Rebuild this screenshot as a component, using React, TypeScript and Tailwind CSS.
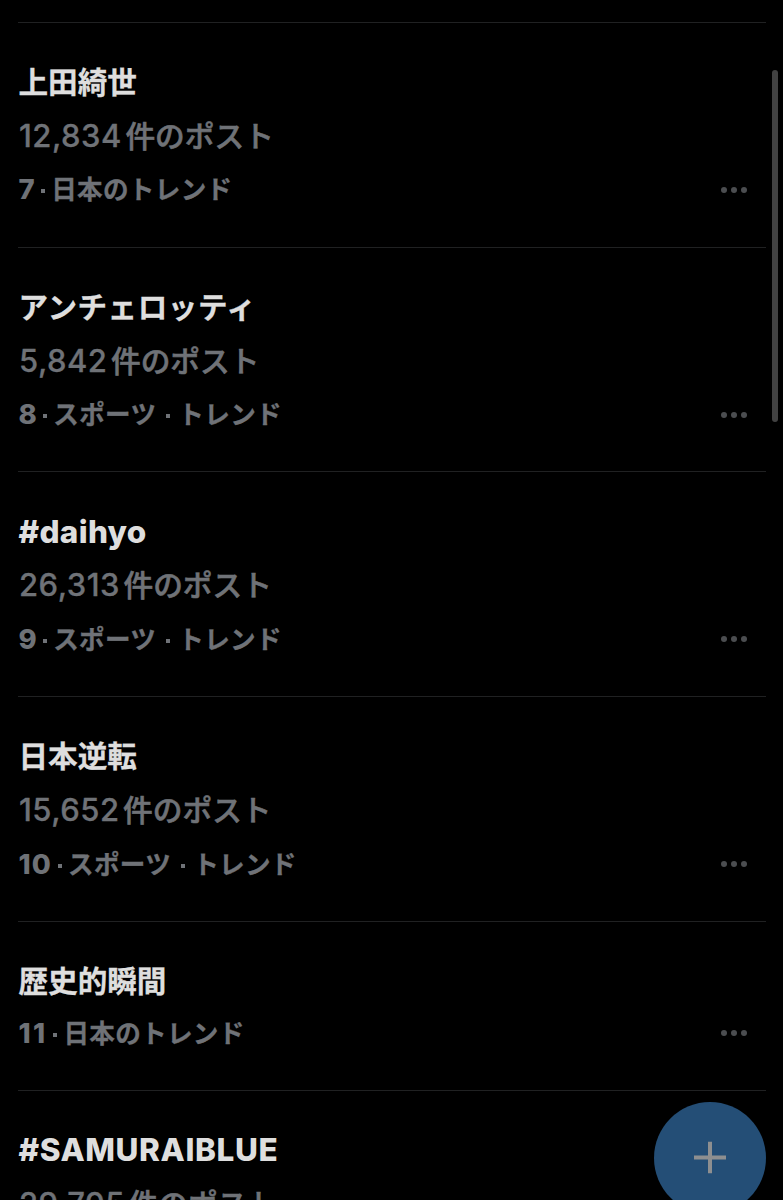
import { clsx } from "clsx"

type Trend = {
  title: string
  titleClass: string
  count?: string
  rank: number
  category: string[]
}

const kanji = "text-[29.6px] font-bold [-webkit-text-stroke:0.3px]"
const kana = "text-[29.6px] font-bold tracking-[0.5px] [-webkit-text-stroke:0.3px]"

const trends: Trend[] = [
  { title: "上田綺世", titleClass: kanji, count: "12,834", rank: 7, category: ["日本のトレンド"] },
  { title: "アンチェロッティ", titleClass: kana, count: "5,842", rank: 8, category: ["スポーツ", "トレンド"] },
  {
    title: "#daihyo",
    titleClass: "text-[31.5px] font-extrabold tracking-[0.3px]",
    count: "26,313",
    rank: 9,
    category: ["スポーツ", "トレンド"],
  },
  { title: "日本逆転", titleClass: kanji, count: "15,652", rank: 10, category: ["スポーツ", "トレンド"] },
  { title: "歴史的瞬間", titleClass: kanji, rank: 11, category: ["日本のトレンド"] },
  {
    title: "#SAMURAIBLUE",
    titleClass: "text-[31.5px] font-extrabold tracking-[0.6px]",
    count: "29,705",
    rank: 12,
    category: ["スポーツ", "トレンド"],
  },
]

function MoreButton() {
  return (
    <button aria-label="もっと見る" className="flex gap-[4px] pr-[19px]">
      <span className="size-[6px] rounded-full bg-[#4b4d50]" />
      <span className="size-[6px] rounded-full bg-[#4b4d50]" />
      <span className="size-[6px] rounded-full bg-[#4b4d50]" />
    </button>
  )
}

function TrendRow({ trend }: { trend: Trend }) {
  return (
    <article
      className={clsx(
        "shrink-0 border-t border-[#202122] pt-[38.2px]",
        trend.count ? "h-[224.75px]" : "h-[169px]"
      )}
    >
      <h2 className={clsx("flex h-[42px] items-center pl-[0.5px] whitespace-nowrap text-[#dedede]", trend.titleClass)}>
        {trend.title}
      </h2>
      {trend.count && (
        <p className="mt-[12px] flex h-[42px] items-baseline pl-px font-medium whitespace-nowrap text-[#6f7277]">
          <span className="text-[31px] leading-[42px] tracking-[0.5px] [-webkit-text-stroke:0.3px]">{trend.count}</span>
          <span className="ml-[3.5px] text-[29.7px] leading-[42px] [-webkit-text-stroke:0.6px]">件のポスト</span>
        </p>
      )}
      <div className={clsx("flex h-[42px] items-center justify-between", trend.count ? "mt-[11.8px]" : "mt-[10.3px]")}>
        <p className="flex items-baseline pl-[0.5px] font-bold whitespace-nowrap text-[#6f7277]">
          <span
            className={clsx(
              "text-[27.5px] leading-[42px] font-extrabold",
              trend.rank === 11 ? "tracking-[2.3px]" : trend.rank > 9 ? "tracking-[1.2px]" : "tracking-[0.5px]"
            )}
          >
            {trend.rank}
          </span>
          {trend.category.map((part, i) => (
            <span key={part} className="flex items-baseline">
              <span
                className={clsx(
                  "size-[4px] -translate-y-[6px] bg-[#6f7277]",
                  i === 0 ? "mr-[6px] ml-[6px]" : "mr-[8.5px] ml-[9.5px]"
                )}
              />
              <span className="text-[25.6px] leading-[42px] tracking-[0.3px] [-webkit-text-stroke:0.3px]">{part}</span>
            </span>
          ))}
        </p>
        <MoreButton />
      </div>
    </article>
  )
}

export default function App() {
  return (
    <div className="relative h-[1200px] overflow-hidden bg-black font-['Inter','Noto_Sans_CJK_JP',sans-serif]">
      <main className="flex flex-col pt-[21.8px] pr-[17px] pl-[18px]">
        {trends.map((trend) => (
          <TrendRow key={trend.title} trend={trend} />
        ))}
      </main>

      {/* Scroll thumb */}
      <div className="absolute top-[70px] right-[5px] h-[352px] w-[6px] rounded-full bg-[#424242]" />

      {/* Compose button */}
      <button
        aria-label="ポストする"
        className="absolute top-[1101.5px] right-[17px] flex size-[112px] items-center justify-center rounded-full bg-[#244e76]"
      >
        <svg viewBox="0 0 32 32" className="size-8 -translate-y-[0.5px]" stroke="#8e8f90" strokeWidth="4" fill="none">
          <path d="M16 0v32M0 16h32" />
        </svg>
      </button>
    </div>
  )
}
